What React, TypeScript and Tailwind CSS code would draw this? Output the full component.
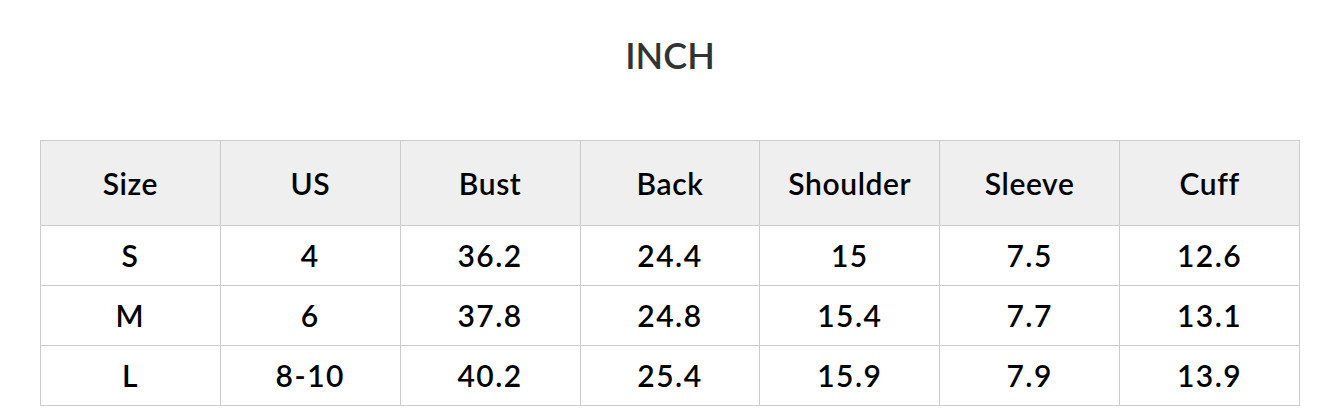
import React from "react"

const HEAD = ["Size", "US", "Bust", "Back", "Shoulder", "Sleeve", "Cuff"]

const ROWS = [
  ["S", "4", "36.2", "24.4", "15", "7.5", "12.6"],
  ["M", "6", "37.8", "24.8", "15.4", "7.7", "13.1"],
  ["L", "8-10", "40.2", "25.4", "15.9", "7.9", "13.9"],
]

export default function App() {
  return (
    <div className="w-[1340px] h-[420px] bg-white font-['Lato','Liberation_Sans',sans-serif] overflow-hidden">
      <h2 className="pt-[34px] h-[140px] text-center text-[36px] leading-[42px] font-semibold text-[#333]">INCH</h2>
      <div className="px-10">
        <table className="w-[1260px] table-fixed border-collapse text-black">
          <thead>
            <tr className="bg-[#efefef] h-[85px]">
              {HEAD.map(h => (
                <th key={h} className="border border-[#cccccc] text-[30px] tracking-[0.02em] font-semibold text-center">{h}</th>
              ))}
            </tr>
          </thead>
          <tbody>
            {ROWS.map(r => (
              <tr key={r[0]} className="h-[60px]">
                {r.map((c, i) => (
                  <td key={i} className="border border-[#cccccc] text-[30px] tracking-[0.05em] font-semibold text-center">{c}</td>
                ))}
              </tr>
            ))}
          </tbody>
        </table>
      </div>
    </div>
  )
}
